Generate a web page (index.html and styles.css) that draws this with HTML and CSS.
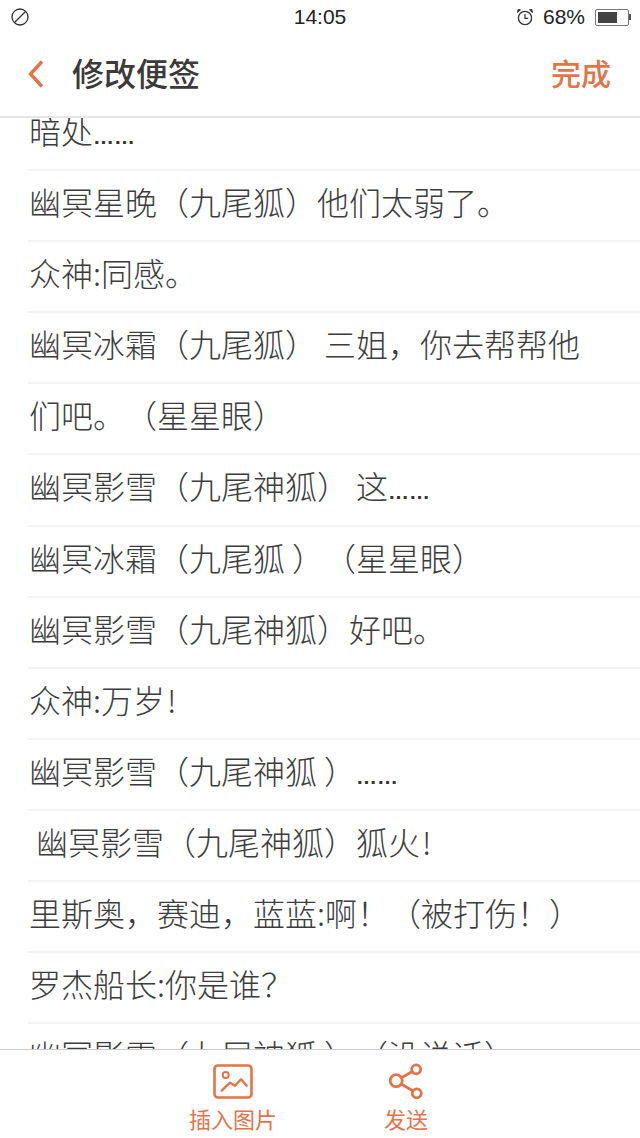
FILE: index.html
```html
<!DOCTYPE html>
<html lang="zh-CN">
<head>
    <meta charset="UTF-8">
    <meta name="viewport" content="width=device-width, initial-scale=1.0">
    <title>修改便签</title>
    <link rel="stylesheet" href="styles.css">
</head>
<body>
    <div class="app">
        <div class="status-bar">
            <div class="status-left">
                <svg class="icon-block" width="20" height="20" viewBox="0 0 20 20"><circle cx="10" cy="10" r="8" fill="none" stroke="#333" stroke-width="1.3"/><path d="M4.500 15.500 15.500 4.500" stroke="#333" stroke-width="1.3"/></svg>
            </div>
            <div class="status-time">14:05</div>
            <div class="status-right">
                <svg width="20" height="20" viewBox="0 0 20 20"><circle cx="10" cy="11" r="6.600" fill="none" stroke="#333" stroke-width="1.3"/><path d="M10 7v4.400h3.200" fill="none" stroke="#333" stroke-width="1.2"/><path d="M2.500 5.500 5.500 2.800 3.200 2.400ZM17.500 5.500 14.500 2.800 16.800 2.400Z" fill="#333" stroke="#333"/></svg>
                <span class="battery-text">68%</span>
                <div class="battery"><div class="battery-level"></div></div>
                <div class="battery-cap"></div>
            </div>
        </div>

        <div class="header">
            <svg class="back" width="18" height="30" viewBox="0 0 18 30"><path d="M15 2.500 3.500 15 15 27.500" fill="none" stroke="#e5734a" stroke-width="3.400"/></svg>
            <div class="title">修改便签</div>
            <div class="done">完成</div>
        </div>

        <div class="content">
            <div class="note">
                <div class="row">暗处<span class="dots">……</span></div>
                <div class="row">幽冥星晚（九尾狐）他们太弱了。</div>
                <div class="row">众神:同感。</div>
                <div class="row">幽冥冰霜（九尾狐） 三姐，你去帮帮他</div>
                <div class="row">们吧。（星星眼）</div>
                <div class="row">幽冥影雪（九尾神狐） 这<span class="dots">……</span></div>
                <div class="row">幽冥冰霜（九尾狐 ）（星星眼）</div>
                <div class="row">幽冥影雪（九尾神狐）好吧。</div>
                <div class="row">众神:万岁<span class="bang">!</span></div>
                <div class="row">幽冥影雪（九尾神狐 ）<span class="dots">……</span></div>
                <div class="row">&nbsp;幽冥影雪（九尾神狐）狐火<span class="bang">!</span></div>
                <div class="row">里斯奥，赛迪，蓝蓝:啊！（被打伤！）</div>
                <div class="row">罗杰船长:你是谁？</div>
                <div class="row">幽冥影雪（九尾神狐 ）（没说话）</div>
            </div>
        </div>

        <div class="toolbar">
            <div class="tool tool-image">
                <svg width="40" height="36" viewBox="0 0 40 36"><rect x="1.500" y="1.500" width="37" height="32" rx="3.500" fill="none" stroke="#e5734a" stroke-width="2.600"/><circle cx="12.700" cy="11" r="3" fill="none" stroke="#e5734a" stroke-width="2"/><path d="M8.700 26.700 17 18.700 22 21.700 28 15.300 33.700 21.700" fill="none" stroke="#e5734a" stroke-width="2.400" stroke-linecap="round" stroke-linejoin="round"/></svg>
                <span>插入图片</span>
            </div>
            <div class="tool tool-send">
                <svg width="38" height="38" viewBox="0 0 38 38"><circle cx="9.200" cy="18.700" r="6" fill="none" stroke="#e5734a" stroke-width="2.800"/><circle cx="29.200" cy="7.300" r="4.500" fill="none" stroke="#e5734a" stroke-width="2.800"/><circle cx="29.800" cy="31.300" r="4.500" fill="none" stroke="#e5734a" stroke-width="2.800"/><path d="M14.500 15.700 25.300 9.500M14.300 22 26 29" stroke="#e5734a" stroke-width="2.800"/></svg>
                <span>发送</span>
            </div>
        </div>
    </div>
</body>
</html>
```

FILE: styles.css
```css
* {
    box-sizing: border-box;
}
html, body {
    margin: 0;
    padding: 0;
}
body {
    font-family: 'Noto Sans CJK SC', sans-serif;
    background-color: white;
    color: #3c3c3c;
}
.app {
    display: flex;
    flex-direction: column;
    width: 640px;
    height: 1138px;
    overflow: hidden;
}
.status-bar {
    display: flex;
    align-items: center;
    justify-content: space-between;
    flex: none;
    height: 34px;
    padding: 0 10px;
    color: #222;
    font-family: 'Liberation Sans', sans-serif;
    font-size: 21px;
}
.status-left {
    width: 200px;
}
.icon-block {
    display: block;
}
.status-right {
    display: flex;
    align-items: center;
    justify-content: flex-end;
    width: 200px;
}
.battery-text {
    margin: 0 10px 0 8px;
}
.battery {
    width: 34px;
    height: 17px;
    padding: 2px;
    border: 1px solid #777;
    border-radius: 2px;
}
.battery-level {
    width: 68%;
    height: 100%;
    background-color: #444;
}
.battery-cap {
    width: 2px;
    height: 6px;
    margin-right: -1px;
    background-color: #555;
}
.header {
    display: flex;
    align-items: center;
    flex: none;
    height: 84px;
    padding: 0 29px 6px 27px;
    border-bottom: 2px solid #e6e6e6;
}
.back {
    margin-top: 4px;
}
.title {
    flex: 1;
    margin-left: 27px;
    font-size: 32px;
    font-weight: 500;
    color: #3a3a3a;
}
.done {
    font-size: 30px;
    font-weight: 500;
    color: #e5734a;
}
.content {
    flex: 1;
    min-height: 0;
    overflow: hidden;
}
.note {
    margin: -18px 0 0 28px;
}
.row {
    height: 71.1px;
    padding-left: 1px;
    line-height: 60px;
    font-size: 32px;
    font-weight: 300;
    white-space: pre;
    text-spacing-trim: space-all;
    border-bottom: 2px solid #f3f3f3;
}
.dots {
    font-family: 'Liberation Sans', sans-serif;
    font-size: 21px;
    font-weight: 700;
    color: #333;
}
.bang {
    margin-left: 2px;
}
.toolbar {
    display: flex;
    flex: none;
    height: 89px;
    border-top: 1px solid #ccc;
    background-color: white;
    color: #e5734a;
}
.tool {
    display: flex;
    flex-direction: column;
    align-items: center;
    font-size: 22px;
    line-height: 30px;
}
.tool svg {
    display: block;
}
.tool-image {
    margin-left: 189px;
    padding-top: 14px;
}
.tool-image span {
    margin-top: 3px;
}
.tool-send {
    margin-left: 107px;
    padding-top: 12px;
}
.tool-send span {
    margin-top: 3px;
}
```
